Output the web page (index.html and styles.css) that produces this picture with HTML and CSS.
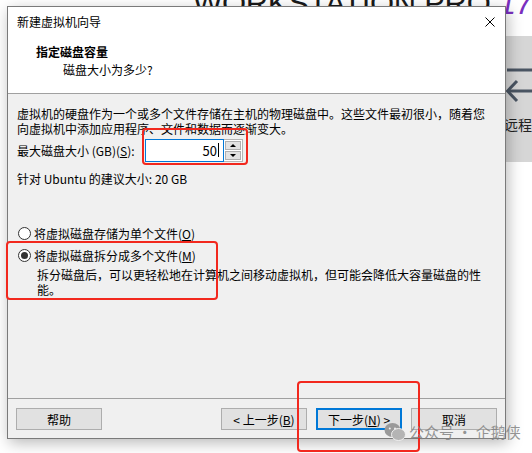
FILE: index.html
```html
<!DOCTYPE html>
<html lang="zh-CN">
<head>
    <meta charset="UTF-8">
    <title>新建虚拟机向导</title>
    <link rel="stylesheet" href="styles.css">
</head>
<body>
    <div class="screen">
        <!-- Workstation window behind the wizard -->
        <div class="brand">WORKSTATION PRO <span class="brand-ver">17</span></div>
        <div class="side-panel">
            <svg class="side-icon" width="26" height="40" viewBox="0 0 26 40">
                <line x1="1" y1="3" x2="26" y2="3" stroke="#4a5563" stroke-width="3"/>
                <polyline points="11,14 1.5,24 11,34" fill="none" stroke="#4a5563" stroke-width="3"/>
                <line x1="2" y1="24" x2="26" y2="24" stroke="#4a5563" stroke-width="3"/>
            </svg>
            <span class="side-label">远程</span>
        </div>

        <div class="dialog">
            <div class="titlebar">
                <span>新建虚拟机向导</span>
                <svg class="close" width="10" height="10" viewBox="0 0 10 10">
                    <path d="M0.5 0.5 L9.5 9.5 M9.5 0.5 L0.5 9.5" stroke="#000" stroke-width="1"/>
                </svg>
            </div>

            <div class="header">
                <div class="header-title">指定磁盘容量</div>
                <div class="header-sub">磁盘大小为多少?</div>
            </div>

            <div class="content">
                <p class="desc">虚拟机的硬盘作为一个或多个文件存储在主机的物理磁盘中。这些文件最初很小，随着您<br>向虚拟机中添加应用程序、文件和数据而逐渐变大。</p>

                <div class="size-row">
                    <label>最大磁盘大小 (GB)(<u>S</u>):</label>
                    <div class="spin-input">
                        <div class="spin-value">50<span class="caret"></span></div>
                        <div class="spin-buttons">
                            <div class="spin-btn"><span class="tri-up"></span></div>
                            <div class="spin-btn"><span class="tri-down"></span></div>
                        </div>
                    </div>
                </div>

                <div class="hint">针对 Ubuntu 的建议大小: 20 GB</div>

                <div class="radio-row first">
                    <span class="radio"></span>
                    <span>将虚拟磁盘存储为单个文件(<u>O</u>)</span>
                </div>
                <div class="radio-row">
                    <span class="radio checked"></span>
                    <span>将虚拟磁盘拆分成多个文件(<u>M</u>)</span>
                </div>
                <p class="radio-desc">拆分磁盘后，可以更轻松地在计算机之间移动虚拟机，但可能会降低大容量磁盘的性<br>能。</p>
            </div>

            <div class="footer">
                <button class="btn">帮助</button>
                <span class="spacer"></span>
                <button class="btn">&lt; 上一步(<u>B</u>)</button>
                <button class="btn default">下一步(<u>N</u>) &gt;</button>
                <button class="btn">取消</button>
            </div>
        </div>

        <!-- red annotation boxes -->
        <div class="mark mark-size"></div>
        <div class="mark mark-split"></div>
        <div class="mark mark-next"></div>

        <div class="watermark">
            <svg width="22" height="20" viewBox="0 0 22 20">
                <ellipse cx="8.5" cy="8" rx="8" ry="7" fill="#9a9a9a"/>
                <ellipse cx="14.5" cy="12.5" rx="7" ry="6" fill="#b4b4b4" stroke="#f0f0f0" stroke-width="1"/>
                <circle cx="5.8" cy="6.5" r="1" fill="#f0f0f0"/>
                <circle cx="11" cy="6.5" r="1" fill="#f0f0f0"/>
            </svg>
            <span>公众号 · 企鹅侠</span>
        </div>
    </div>
</body>
</html>
```

FILE: styles.css
```css
/* Windows wizard look */
body {
    margin: 0;
    font-family: "Noto Sans CJK SC", "Microsoft YaHei", sans-serif;
    font-size: 12px;
    color: #000000;
}

.screen {
    position: relative;
    width: 532px;
    height: 453px;
    overflow: hidden;
    background-color: #ffffff;
}

/* background application */
.brand {
    position: absolute;
    left: 193px;
    top: -12px;
    font-family: "Liberation Sans", Arial, sans-serif;
    font-size: 31px;
    line-height: 31px;
    letter-spacing: -0.3px;
    color: #1a1a1a;
    white-space: nowrap;
}

.brand-ver {
    color: #7b2fbf;
    font-style: italic;
}

.side-panel {
    position: absolute;
    left: 500px;
    top: 36px;
    width: 32px;
    height: 126px;
    background-color: #d6d6d6;
}

.side-icon {
    position: absolute;
    left: 6px;
    top: 31px;
}

.side-label {
    position: absolute;
    left: 4px;
    top: 78px;
    font-size: 14px;
    color: #222222;
    white-space: nowrap;
}

/* dialog window */
.dialog {
    position: absolute;
    left: 7px;
    top: 6px;
    width: 499px;
    height: 433px;
    box-sizing: border-box;
    border: 1px solid #7a7a7a;
    background-color: #f0f0f0;
    box-shadow: 2px 4px 14px rgba(0, 0, 0, 0.28);
    display: flex;
    flex-direction: column;
}

.titlebar {
    height: 30px;
    display: flex;
    align-items: center;
    justify-content: space-between;
    padding: 0 10px 0 9px;
    background-color: #ffffff;
    line-height: 30px;
}

.header {
    background-color: #ffffff;
    border-bottom: 1px solid #a0a0a0;
    padding-top: 7px;
    height: 49px;
}

.header-title {
    padding-left: 28px;
    font-weight: bold;
    line-height: 16px;
}

.header-sub {
    padding-left: 55px;
    margin-top: 2px;
    line-height: 16px;
}

.content {
    flex: 1;
    padding: 12px 9px 0 9px;
}

.desc {
    margin: 0;
    line-height: 15px;
    white-space: nowrap;
}

.size-row {
    display: flex;
    align-items: center;
    height: 24px;
    margin-top: 2px;
}

.size-row label {
    width: 128px;
}

.spin-input {
    display: flex;
    height: 23px;
}

.spin-value {
    width: 79px;
    box-sizing: border-box;
    border: 1px solid #0078d7;
    background-color: #ffffff;
    display: flex;
    align-items: center;
    justify-content: flex-end;
    padding-right: 4px;
    font-size: 13px;
}

.caret {
    display: inline-block;
    width: 1px;
    height: 14px;
    background-color: #000000;
    margin-left: 1px;
}

.spin-buttons {
    display: flex;
    flex-direction: column;
    width: 16px;
    border: 1px solid #b5b5b5;
    border-left: none;
    background-color: #ffffff;
    padding: 1px;
    gap: 1px;
}

.spin-btn {
    flex: 1;
    background-color: #e3e3e3;
    border: 1px solid #b0b0b0;
    display: flex;
    align-items: center;
    justify-content: center;
}

.tri-up {
    border-left: 3px solid transparent;
    border-right: 3px solid transparent;
    border-bottom: 3px solid #000000;
}

.tri-down {
    border-left: 3px solid transparent;
    border-right: 3px solid transparent;
    border-top: 3px solid #000000;
}

.hint {
    margin-top: 9px;
    line-height: 15px;
}

.radio-row {
    display: flex;
    align-items: center;
    height: 16px;
    padding-left: 1px;
    gap: 3px;
    margin-top: 6px;
}

.radio-row.first {
    margin-top: 39px;
}

.radio {
    width: 13px;
    height: 13px;
    box-sizing: border-box;
    border: 1px solid #333333;
    border-radius: 50%;
    background-color: #ffffff;
    display: flex;
    align-items: center;
    justify-content: center;
}

.radio.checked::after {
    content: "";
    width: 7px;
    height: 7px;
    border-radius: 50%;
    background-color: #333333;
}

.radio-desc {
    margin: 4px 0 0 20px;
    line-height: 15px;
    white-space: nowrap;
}

/* footer buttons */
.footer {
    height: 40px;
    box-sizing: border-box;
    border-top: 1px solid #a0a0a0;
    display: flex;
    align-items: flex-start;
    padding: 9px 8px 0 8px;
    gap: 9px;
}

.spacer {
    flex: 1;
}

.btn {
    width: 86px;
    height: 22px;
    box-sizing: border-box;
    background-color: #e1e1e1;
    border: 1px solid #adadad;
    font-family: inherit;
    font-size: 12px;
    padding: 0;
    color: #000000;
}

.btn.default {
    border: 2px solid #0078d7;
}

/* annotations */
.mark {
    position: absolute;
    border: 2.5px solid #f2281e;
    border-radius: 4px;
    box-sizing: border-box;
}

.mark-size {
    left: 142px;
    top: 128px;
    width: 106px;
    height: 37px;
}

.mark-split {
    left: 6px;
    top: 241px;
    width: 212px;
    height: 59px;
}

.mark-next {
    left: 297px;
    top: 381px;
    width: 123px;
    height: 71px;
}

.watermark {
    position: absolute;
    left: 384px;
    top: 421px;
    display: flex;
    align-items: center;
    gap: 3px;
    color: rgba(130, 130, 130, 0.85);
    font-size: 15px;
    white-space: nowrap;
}
```
